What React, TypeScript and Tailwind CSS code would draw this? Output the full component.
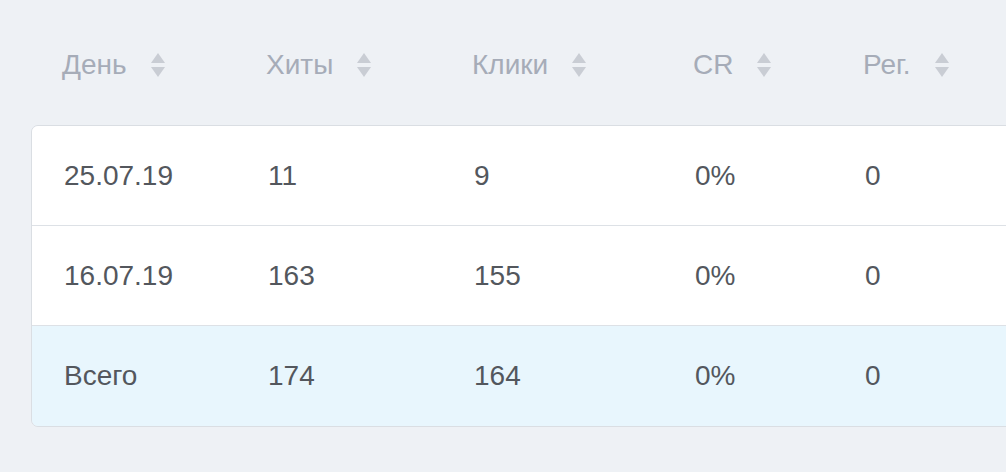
import React from "react";

// Stats table: daily hits / clicks / CR / registrations

const columns = ["День", "Хиты", "Клики", "CR", "Рег."];
const widths = ["w-[204px]", "w-[206px]", "w-[221px]", "w-[170px]", "w-[200px]"];

const rows = [
  ["25.07.19", "11", "9", "0%", "0"],
  ["16.07.19", "163", "155", "0%", "0"],
];
const total = ["Всего", "174", "164", "0%", "0"];

function SortIcon() {
  return (
    <svg width="14" height="24" viewBox="0 0 14 24" className="ml-[24px] shrink-0">
      <path d="M7 0 L14 10 L0 10 Z" fill="#c9cdd4" />
      <path d="M0 14 L14 14 L7 24 Z" fill="#c9cdd4" />
    </svg>
  );
}

function Row({ cells, total }: { cells: string[]; total?: boolean }) {
  return (
    <div
      className={`flex items-center h-[100px] pl-8 ${
        total ? "bg-[#e8f6fd]" : "bg-white border-b border-[#dde1e6]"
      }`}
    >
      {cells.map((c, i) => (
        <div key={i} className={`${widths[i]} shrink-0 text-[28px] text-[#53575d]`}>
          {c}
        </div>
      ))}
    </div>
  );
}

export default function App() {
  return (
    <div
      className="w-[1006px] h-[472px] overflow-hidden bg-[#eef1f5]"
      style={{ fontFamily: '"Liberation Sans", Arial, sans-serif' }}
    >
      <div className="flex items-center h-[125px] pl-[62px] pt-[4px]">
        {columns.map((c, i) => (
          <div key={c} className={`${widths[i]} shrink-0 flex items-center text-[28px] text-[#a6acb8]`}>
            {c}
            <SortIcon />
          </div>
        ))}
      </div>
      <div className="ml-[31px] w-[1000px] rounded-l-[7px] border border-[#dadee3] overflow-hidden">
        {rows.map((r) => (
          <Row key={r[0]} cells={r} />
        ))}
        <Row cells={total} total />
      </div>
    </div>
  );
}
